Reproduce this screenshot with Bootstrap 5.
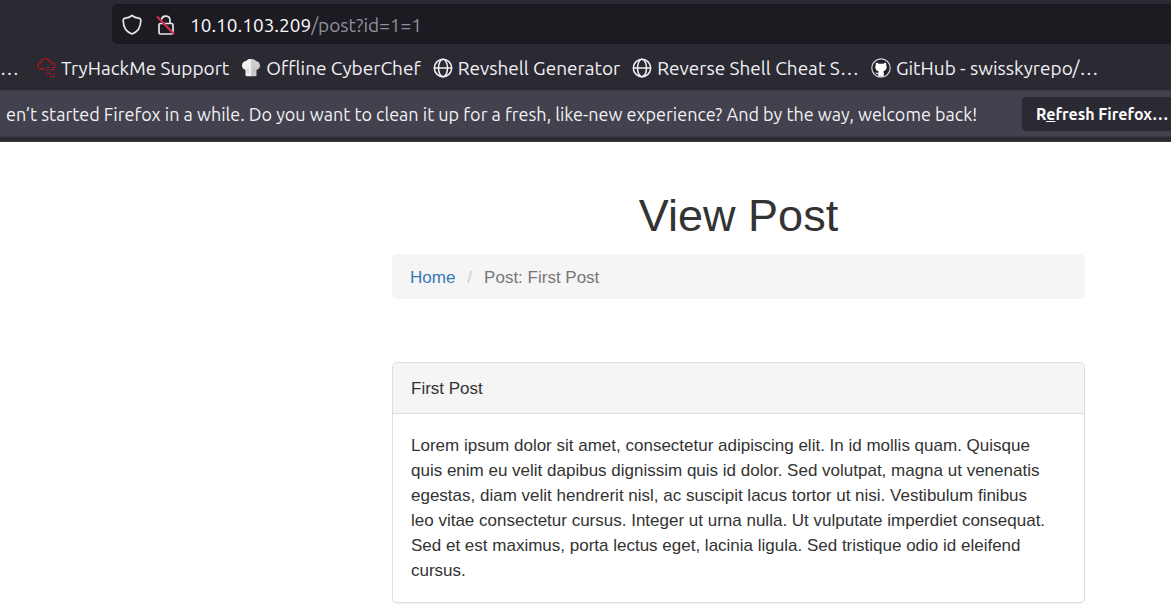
<!DOCTYPE html>
<html lang="en">
<head>
<meta charset="utf-8">
<meta name="viewport" content="width=device-width, initial-scale=1">
<title>View Post</title>
<link href="https://cdn.jsdelivr.net/npm/bootstrap@5.3.0/dist/css/bootstrap.min.css" rel="stylesheet">
<style>
body { font-family: "Liberation Sans", Arial, sans-serif; font-size: 17px; line-height: 25px; color: #333; background: #fff; overflow-x: hidden; }
.browser-chrome { font-family: Ubuntu, "Noto Sans", sans-serif; font-size: 19px; color: #f0f0f4; background: #2b2a33; white-space: nowrap; line-height: 24px; }
.browser-chrome svg { flex: none; }
.address-row { padding: 4px 0 0 112px; }
.address-bar { height: 40px; padding: 2px 10px 0; gap: 14px; background: #1c1b22; border-radius: 5px 0 0 5px; }
.address-bar .host { color: #fbfbfe; }
.address-bar input { color: #8f8f9d; background: transparent; border: 0; padding: 0; outline: 0; line-height: 24px; min-width: 0; }
.bookmarks { height: 46px; padding-top: 2px; gap: 12px; overflow: hidden; }
.bookmarks a { color: inherit; gap: 5px; }
.bookmarks .cut-label { width: 24px; }
.notice { height: 46px; background: #42414d; border-top: 1px solid #3a3944; overflow: hidden; }
.notice-text { flex: 0 0 1022px; padding-left: 6px; font-size: 18px; }
.refresh { flex: none; height: 34px; padding: 0 14px; font-size: 16px; font-weight: 700; line-height: 24px; color: #fbfbfe; background: #2b2a33; border: 0; border-radius: 4px; }
.chrome-edge { height: 6px; border-top: 1px solid #3a3944; border-bottom: 1px solid #38383d; }
.post-page { padding: 49px 0 10px 306px; }
.post-column { width: 100%; max-width: 693px; }
.post-title { font-size: 45px; line-height: 50px; font-weight: 400; margin: 0 0 13px; }
.post-path { background: #f5f5f5; border-radius: 5px; padding: 11px 18px 9px; margin: 0 0 63px; --bs-breadcrumb-divider-color: #ccc; --bs-breadcrumb-item-padding-x: 12px; --bs-breadcrumb-item-active-color: #777; }
.post-path a { color: #337ab7; }
.post-card { border: 1px solid #ddd; border-radius: 5px; box-shadow: 0 1px 1px rgba(0,0,0,.05); color: #333; }
.post-card .card-header { background: #f5f5f5; border-color: #ddd; padding: 13px 18px 12px; }
.post-card .card-body { padding: 19px 35px 19px 18px; }
</style>
</head>
<body>
<header class="browser-chrome">
  <div class="address-row">
    <div class="address-bar d-flex align-items-center">
      <svg width="20" height="22" viewBox="0 0 20 22" fill="none" stroke="#e6e6ea" stroke-width="1.7" stroke-linejoin="round"><path d="M10 1.500C8 3.200 5 4 2.500 4.300 1.200 4.600 1.200 5.200 1.200 6.500 1.300 13 4.500 18 10 20 15.500 18 18.700 13 18.800 6.500c0-1.300 0-1.900-1.300-2.200C15 4 12 3.200 10 1.500Z"/></svg>
      <svg width="20" height="22" viewBox="0 0 20 22" fill="none"><path d="M5.500 5.500A4.300 4.300 0 0 1 14 6.500V9.500M4 9.500h11.500q1.500 0 1.500 1.500v7.500q0 1.500-1.500 1.500h-11q-1.500 0-1.500-1.500V11q0-1.500 1.500-1.500" stroke="#e6e6ea" stroke-width="1.700" stroke-linejoin="round"/><path d="M1 2.500 18 20" stroke="#e22850" stroke-width="2"/></svg>
      <div class="d-flex flex-fill">
        <label class="host" for="url">10.10.103.209</label>
        <input class="flex-fill" id="url" type="text" value="/post?id=1=1">
      </div>
    </div>
  </div>
  <nav class="bookmarks d-flex align-items-center" aria-label="Bookmarks">
    <a class="cut-label text-decoration-none" href="#">…</a>
    <a class="d-flex align-items-center text-decoration-none" href="#">
      <svg width="20" height="20" viewBox="0 0 20 20" fill="none" stroke="#b5141c" stroke-width="1.300"><path d="M8.500 11H4A3 3 0 0 1 4.300 5.200C5.500-.200 13-.500 14.200 4.300c2.700 0 4.500 1.700 4.800 4.200"/><path d="M11 9.500h3M16 9.500h3M10 12h3M15 11.500h4M10 15.500h5M17 16h2M14 18.500h5" stroke-width="1.100"/></svg>
      <span>TryHackMe Support</span></a>
    <a class="d-flex align-items-center text-decoration-none" href="#">
      <svg width="20" height="20" viewBox="0 0 20 20"><path fill="#f0f0f0" d="M4.500 17.500v-5.700C-.500 11 0 3.500 5 3 7 .500 10 1 10 1v17.200H5.500z"/><path fill="#ccc" d="M10 1c2 0 4 .500 5 2 5 .500 5.500 8 .500 8.800v5.700l-1 .700H10z"/><path d="M7 10.500v5M13 10.500v5" stroke="#aaa" stroke-width=".7"/></svg>
      <span>Offline CyberChef</span></a>
    <a class="d-flex align-items-center text-decoration-none" href="#">
      <svg width="20" height="20" viewBox="0 0 20 20" fill="none" stroke="#f0f0f4" stroke-width="1.500"><circle cx="10" cy="10" r="8.700"/><ellipse cx="10" cy="10" rx="4.500" ry="8.700"/><path d="M1.500 10h17"/></svg>
      <span>Revshell Generator</span></a>
    <a class="d-flex align-items-center text-decoration-none" href="#">
      <svg width="20" height="20" viewBox="0 0 20 20" fill="none" stroke="#f0f0f4" stroke-width="1.500"><circle cx="10" cy="10" r="8.700"/><ellipse cx="10" cy="10" rx="4.500" ry="8.700"/><path d="M1.500 10h17"/></svg>
      <span>Reverse Shell Cheat S…</span></a>
    <a class="d-flex align-items-center text-decoration-none" href="#">
      <svg width="20" height="20" viewBox="0 0 20 20"><circle cx="10" cy="10" r="9.200" fill="#222129" stroke="#d0d0d4" stroke-width="1.200"/><path fill="#fff" d="M5 4.500 8 5.700h4l3-1.200.300 2.700c1 2.500-.300 5.600-3 6.100.500.700.500 1.700.500 5.200H7.300v-2.200c-2 .200-2.500-1-3-2 1.500 0 1.500 1.200 3 .800 0-.800 0-1.300.500-1.800-3-.500-4.200-3.600-3.100-6.100z"/></svg>
      <span>GitHub - swisskyrepo/…</span></a>
  </nav>
  <div class="notice d-flex align-items-center">
    <div class="notice-text">en’t started Firefox in a while. Do you want to clean it up for a fresh, like-new experience? And by the way, welcome back!</div>
    <button class="refresh" type="button">R<u>e</u>fresh Firefox…</button>
  </div>
  <div class="chrome-edge"></div>
</header>
<main class="post-page d-flex justify-content-center">
  <div class="post-column">
    <h1 class="post-title text-center">View Post</h1>
    <nav aria-label="breadcrumb">
      <ol class="breadcrumb post-path">
        <li class="breadcrumb-item"><a class="text-decoration-none" href="#">Home</a></li>
        <li class="breadcrumb-item active" aria-current="page">Post: First Post</li>
      </ol>
    </nav>
    <article class="card post-card">
      <div class="card-header">First Post</div>
      <div class="card-body">Lorem ipsum dolor sit amet, consectetur adipiscing elit. In id mollis quam. Quisque quis enim eu velit dapibus dignissim quis id dolor. Sed volutpat, magna ut venenatis egestas, diam velit hendrerit nisl, ac suscipit lacus tortor ut nisi. Vestibulum finibus leo vitae consectetur cursus. Integer ut urna nulla. Ut vulputate imperdiet consequat. Sed et est maximus, porta lectus eget, lacinia ligula. Sed tristique odio id eleifend cursus.</div>
    </article>
  </div>
</main>
<script src="https://cdn.jsdelivr.net/npm/bootstrap@5.3.0/dist/js/bootstrap.bundle.min.js"></script>
</body>
</html>
